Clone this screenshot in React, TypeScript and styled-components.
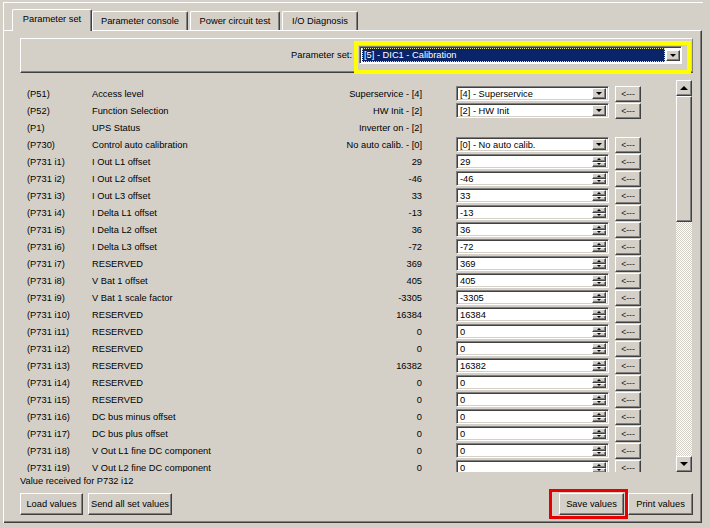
import React from "react";
import styled, { createGlobalStyle, css } from "styled-components";

const BG = "#d4d0c8";

const Global = createGlobalStyle`
  html, body { margin: 0; padding: 0; background: ${BG}; }
  body { font-family: "Liberation Sans", Arial, sans-serif; font-size: 9.3px; color: #000; }
  * { box-sizing: border-box; }
`;

const raised = css`
  background: ${BG};
  border-top: 1px solid #ffffff;
  border-left: 1px solid #ffffff;
  border-right: 1px solid #404040;
  border-bottom: 1px solid #404040;
  box-shadow: inset -1px -1px 0 #808080;
`;

const Page = styled.div`
  width: 710px;
  height: 528px;
  padding: 2px 0 0 3px;
  background: ${BG};
  overflow: hidden;
`;

const Frame = styled.div`
  width: 700px;
  height: 521px;
  border-top: 1px solid #ffffff;
  border-left: 1px solid #ffffff;
  display: flex;
  flex-direction: column;
`;

const TabStrip = styled.div`
  display: flex;
  align-items: flex-end;
  height: 27px;
  padding-left: 8px;
  position: relative;
  z-index: 1;
`;

const Tab = styled.div<{ $w: number; $active?: boolean }>`
  width: ${(p) => p.$w}px;
  height: ${(p) => (p.$active ? 22 : 19)}px;
  margin-bottom: ${(p) => (p.$active ? -1 : 0)}px;
  margin-right: ${(p) => (p.$active ? 0 : 2)}px;
  background: ${BG};
  border-top: 1px solid #ffffff;
  border-left: 1px solid #ffffff;
  border-right: 1px solid #404040;
  box-shadow: inset -1px 0 0 #808080;
  border-radius: 2px 2px 0 0;
  display: flex;
  align-items: center;
  justify-content: center;
  padding-bottom: ${(p) => (p.$active ? 3 : 0)}px;
  white-space: nowrap;
`;

const Panel = styled.div`
  flex: 1;
  width: 698px;
  border-top: 1px solid #ffffff;
  border-right: 1px solid #404040;
  border-bottom: 1px solid #404040;
  box-shadow: inset -1px -1px 0 #808080;
  padding: 7px 0 0 16px;
  display: flex;
  flex-direction: column;
`;

const HeaderGroup = styled.div`
  width: 673px;
  height: 35px;
  border-top: 1px solid #ffffff;
  border-left: 1px solid #ffffff;
  border-right: 1px solid #808080;
  border-bottom: 1px solid #404040;
  box-shadow: inset 0 -1px 0 #808080;
  display: flex;
  justify-content: flex-end;
  align-items: flex-start;
`;

const HeaderLabel = styled.span`
  margin-top: 11px;
  margin-right: 2px;
`;

const Highlight = styled.div`
  width: 337px;
  height: 33px;
  margin-top: 2px;
  margin-right: 1px;
  border: 4px solid #ffff00;
  padding: 1px 0 0 1px;
`;

const SetCombo = styled.div`
  width: 323px;
  height: 18px;
  background: #ffffff;
  border-top: 1px solid #808080;
  border-left: 1px solid #808080;
  border-right: 1px solid #ffffff;
  border-bottom: 1px solid #ffffff;
  box-shadow: inset 1px 1px 0 #404040;
  display: flex;
  align-items: center;
  padding: 1px 1px 1px 2px;
`;

const SetSelected = styled.div`
  flex: 1;
  height: 14px;
  background: #0a246a;
  color: #ffffff;
  outline: 1px dotted #e0e0a0;
  outline-offset: -1px;
  display: flex;
  align-items: center;
  padding-left: 2px;
  margin-right: 1px;
`;

const ListArea = styled.div`
  width: 673px;
  height: 392px;
  margin-top: 7px;
  display: flex;
  overflow: hidden;
`;

const Rows = styled.div`
  flex: 1;
  padding-top: 5px;
  display: flex;
  flex-direction: column;
`;

const Row = styled.div`
  height: 17px;
  flex: none;
  display: flex;
  align-items: center;
  padding-left: 7px;
  white-space: nowrap;
`;

const Code = styled.span`
  width: 65px;
`;

const Name = styled.span`
  width: 208px;
`;

const Current = styled.span`
  width: 122px;
  text-align: right;
`;

const Field = styled.div`
  width: 153px;
  height: 15px;
  margin-left: 34px;
  background: #ffffff;
  border-top: 1px solid #808080;
  border-left: 1px solid #808080;
  border-right: 1px solid #ffffff;
  border-bottom: 1px solid #ffffff;
  box-shadow: inset 1px 1px 0 #404040, inset -1px -1px 0 ${BG};
  display: flex;
  align-items: center;
  padding: 1px 2px 1px 2px;
`;

const FieldText = styled.span`
  flex: 1;
  padding-left: 1px;
`;

const DropBtn = styled.div`
  ${raised};
  width: 14px;
  height: 11px;
  display: flex;
  align-items: center;
  justify-content: center;
  &::after {
    content: "";
    border-left: 3px solid transparent;
    border-right: 3px solid transparent;
    border-top: 3px solid #000;
  }
`;

const Spin = styled.div`
  width: 14px;
  height: 11px;
  display: flex;
  flex-direction: column;
`;

const SpinHalf = styled.div<{ $down?: boolean }>`
  ${raised};
  flex: 1;
  display: flex;
  align-items: center;
  justify-content: center;
  &::after {
    content: "";
    border-left: 2px solid transparent;
    border-right: 2px solid transparent;
    ${(p) =>
      p.$down
        ? "border-top: 2px solid #000;"
        : "border-bottom: 2px solid #000;"}
  }
`;

const ArrowBtn = styled.div`
  ${raised};
  width: 26px;
  height: 16px;
  margin-left: 6px;
  display: flex;
  align-items: center;
  justify-content: center;
  font-size: 8.5px;
  color: #202020;
`;

const ScrollBar = styled.div`
  width: 16px;
  height: 392px;
  margin-right: 1px;
  display: flex;
  flex-direction: column;
  flex: none;
`;

const ScrollBtn = styled.div<{ $down?: boolean }>`
  ${raised};
  width: 16px;
  height: 16px;
  flex: none;
  display: flex;
  align-items: center;
  justify-content: center;
  &::after {
    content: "";
    border-left: 4px solid transparent;
    border-right: 4px solid transparent;
    ${(p) =>
      p.$down
        ? "border-top: 4px solid #000;"
        : "border-bottom: 4px solid #000;"}
  }
`;

const Thumb = styled.div`
  ${raised};
  height: 126px;
  flex: none;
`;

const Track = styled.div`
  flex: 1;
  background: repeating-conic-gradient(#ffffff 0 25%, ${BG} 0 50%) 0 0 / 2px 2px;
`;

const Status = styled.div`
  margin-top: 3px;
  height: 12px;
  line-height: 12px;
`;

const ButtonRow = styled.div`
  margin-top: 2px;
  width: 673px;
  display: flex;
  align-items: center;
  gap: 5px;
`;

const Spacer = styled.div`
  flex: 1;
`;

const Button = styled.div<{ $w: number }>`
  ${raised};
  width: ${(p) => p.$w}px;
  height: 22px;
  display: flex;
  align-items: center;
  justify-content: center;
  white-space: nowrap;
`;

const RedMark = styled.div`
  border: 3px solid #e80000;
  padding: 1px 1px 1px 7px;
  margin-right: -5px;
`;

type RowData = {
  code: string;
  name: string;
  cur: string;
  kind: "select" | "spin" | "none";
  val?: string;
};

const rows: RowData[] = [
  { code: "(P51)", name: "Access level", cur: "Superservice - [4]", kind: "select", val: "[4] - Superservice" },
  { code: "(P52)", name: "Function Selection", cur: "HW Init - [2]", kind: "select", val: "[2] - HW Init" },
  { code: "(P1)", name: "UPS Status", cur: "Inverter on - [2]", kind: "none" },
  { code: "(P730)", name: "Control auto calibration", cur: "No auto calib. - [0]", kind: "select", val: "[0] - No auto calib." },
  { code: "(P731 i1)", name: "I Out L1 offset", cur: "29", kind: "spin" },
  { code: "(P731 i2)", name: "I Out L2 offset", cur: "-46", kind: "spin" },
  { code: "(P731 i3)", name: "I Out L3 offset", cur: "33", kind: "spin" },
  { code: "(P731 i4)", name: "I Delta L1 offset", cur: "-13", kind: "spin" },
  { code: "(P731 i5)", name: "I Delta L2 offset", cur: "36", kind: "spin" },
  { code: "(P731 i6)", name: "I Delta L3 offset", cur: "-72", kind: "spin" },
  { code: "(P731 i7)", name: "RESERVED", cur: "369", kind: "spin" },
  { code: "(P731 i8)", name: "V Bat 1 offset", cur: "405", kind: "spin" },
  { code: "(P731 i9)", name: "V Bat 1 scale factor", cur: "-3305", kind: "spin" },
  { code: "(P731 i10)", name: "RESERVED", cur: "16384", kind: "spin" },
  { code: "(P731 i11)", name: "RESERVED", cur: "0", kind: "spin" },
  { code: "(P731 i12)", name: "RESERVED", cur: "0", kind: "spin" },
  { code: "(P731 i13)", name: "RESERVED", cur: "16382", kind: "spin" },
  { code: "(P731 i14)", name: "RESERVED", cur: "0", kind: "spin" },
  { code: "(P731 i15)", name: "RESERVED", cur: "0", kind: "spin" },
  { code: "(P731 i16)", name: "DC bus minus offset", cur: "0", kind: "spin" },
  { code: "(P731 i17)", name: "DC bus plus offset", cur: "0", kind: "spin" },
  { code: "(P731 i18)", name: "V Out L1 fine DC component", cur: "0", kind: "spin" },
  { code: "(P731 i19)", name: "V Out L2 fine DC component", cur: "0", kind: "spin" },
];

const tabs = [
  { label: "Parameter set", w: 80, active: true },
  { label: "Parameter console", w: 96 },
  { label: "Power circuit test", w: 90 },
  { label: "I/O Diagnosis", w: 76 },
];

export default function App() {
  return (
    <Page>
      <Global />
      <Frame>
        <TabStrip>
          {tabs.map((t) => (
            <Tab key={t.label} $w={t.w} $active={t.active}>
              {t.label}
            </Tab>
          ))}
        </TabStrip>
        <Panel>
          <HeaderGroup>
            <HeaderLabel>Parameter set:</HeaderLabel>
            <Highlight>
              <SetCombo>
                <SetSelected>[5] - DIC1 - Calibration</SetSelected>
                <DropBtn />
              </SetCombo>
            </Highlight>
          </HeaderGroup>
          <ListArea>
            <Rows>
              {rows.map((r) => (
                <Row key={r.code}>
                  <Code>{r.code}</Code>
                  <Name>{r.name}</Name>
                  <Current>{r.cur}</Current>
                  {r.kind !== "none" && (
                    <>
                      <Field>
                        <FieldText>{r.kind === "select" ? r.val : r.cur}</FieldText>
                        {r.kind === "select" ? (
                          <DropBtn />
                        ) : (
                          <Spin>
                            <SpinHalf />
                            <SpinHalf $down />
                          </Spin>
                        )}
                      </Field>
                      <ArrowBtn>&lt;---</ArrowBtn>
                    </>
                  )}
                </Row>
              ))}
            </Rows>
            <ScrollBar>
              <ScrollBtn />
              <Thumb />
              <Track />
              <ScrollBtn $down />
            </ScrollBar>
          </ListArea>
          <Status>Value received for P732 i12</Status>
          <ButtonRow>
            <Button $w={63}>Load values</Button>
            <Button $w={84}>Send all set values</Button>
            <Spacer />
            <RedMark>
              <Button $w={65}>Save values</Button>
            </RedMark>
            <Button $w={65}>Print values</Button>
          </ButtonRow>
        </Panel>
      </Frame>
    </Page>
  );
}
